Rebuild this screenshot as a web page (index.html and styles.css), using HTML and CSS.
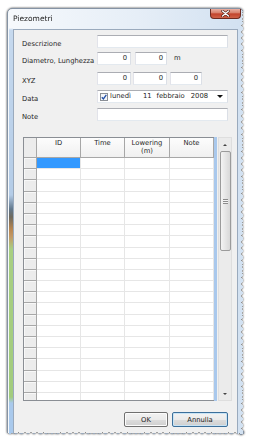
FILE: index.html
```html
<!DOCTYPE html>
<html lang="it">
<head>
<meta charset="utf-8">
<title>Piezometri</title>
<link rel="stylesheet" href="styles.css">
</head>
<body>
<div class="shadow">
  <div class="window">
    <div class="titlebar">
      <span class="title">Piezometri</span>
      <span class="close">
        <svg width="9" height="7" viewBox="0 0 9 7"><path d="M1.5 1 L7.5 6 M7.5 1 L1.5 6" stroke="#4a1a12" stroke-width="2.6" stroke-linecap="round"/><path d="M1.5 1 L7.5 6 M7.5 1 L1.5 6" stroke="#fff" stroke-width="1.4" stroke-linecap="round"/></svg>
      </span>
    </div>
    <div class="client">
      <div class="form">
        <div class="row">
          <label>Descrizione</label>
          <div class="field w-wide"></div>
        </div>
        <div class="row row2">
          <label>Diametro, Lunghezza</label>
          <div class="field w34">0</div>
          <div class="field w32 ml4">0</div>
          <span class="unit">m</span>
        </div>
        <div class="row row3">
          <label>XYZ</label>
          <div class="field w34">0</div>
          <div class="field w34 ml2">0</div>
          <div class="field w32 ml3">0</div>
        </div>
        <div class="row row4">
          <label>Data</label>
          <div class="field date">
            <svg class="check" width="8" height="8" viewBox="0 0 8 8"><rect x="0.5" y="0.5" width="7" height="7" fill="#f4f6f9" stroke="#8a8f96"/><path d="M1.8 4.2 L3.4 5.9 L6.3 1.8" fill="none" stroke="#2250a8" stroke-width="1.3"/></svg>
            <span class="d-day">lunedì</span>
            <span class="d-num">11</span>
            <span class="d-month">febbraio</span>
            <span class="d-year">2008</span>
            <span class="d-arrow"></span>
          </div>
        </div>
        <div class="row row5">
          <label>Note</label>
          <div class="field w-wide"></div>
        </div>
      </div>

      <div class="gridwrap">
        <div class="table">
          <div class="thead">
            <div class="th corner"></div>
            <div class="th">ID</div>
            <div class="th">Time</div>
            <div class="th">Lowering<br>(m)</div>
            <div class="th">Note</div>
          </div>
          <div class="tbody">
            <div class="rh"></div><div class="td sel"></div><div class="td"></div><div class="td"></div><div class="td"></div>
            <div class="rh"></div><div class="td"></div><div class="td"></div><div class="td"></div><div class="td"></div>
            <div class="rh"></div><div class="td"></div><div class="td"></div><div class="td"></div><div class="td"></div>
            <div class="rh"></div><div class="td"></div><div class="td"></div><div class="td"></div><div class="td"></div>
            <div class="rh"></div><div class="td"></div><div class="td"></div><div class="td"></div><div class="td"></div>
            <div class="rh"></div><div class="td"></div><div class="td"></div><div class="td"></div><div class="td"></div>
            <div class="rh"></div><div class="td"></div><div class="td"></div><div class="td"></div><div class="td"></div>
            <div class="rh"></div><div class="td"></div><div class="td"></div><div class="td"></div><div class="td"></div>
            <div class="rh"></div><div class="td"></div><div class="td"></div><div class="td"></div><div class="td"></div>
            <div class="rh"></div><div class="td"></div><div class="td"></div><div class="td"></div><div class="td"></div>
            <div class="rh"></div><div class="td"></div><div class="td"></div><div class="td"></div><div class="td"></div>
            <div class="rh"></div><div class="td"></div><div class="td"></div><div class="td"></div><div class="td"></div>
            <div class="rh"></div><div class="td"></div><div class="td"></div><div class="td"></div><div class="td"></div>
            <div class="rh"></div><div class="td"></div><div class="td"></div><div class="td"></div><div class="td"></div>
            <div class="rh"></div><div class="td"></div><div class="td"></div><div class="td"></div><div class="td"></div>
            <div class="rh"></div><div class="td"></div><div class="td"></div><div class="td"></div><div class="td"></div>
            <div class="rh"></div><div class="td"></div><div class="td"></div><div class="td"></div><div class="td"></div>
            <div class="rh"></div><div class="td"></div><div class="td"></div><div class="td"></div><div class="td"></div>
            <div class="rh"></div><div class="td"></div><div class="td"></div><div class="td"></div><div class="td"></div>
            <div class="rh"></div><div class="td"></div><div class="td"></div><div class="td"></div><div class="td"></div>
            <div class="rh"></div><div class="td"></div><div class="td"></div><div class="td"></div><div class="td"></div>
            <div class="rh"></div><div class="td"></div><div class="td"></div><div class="td"></div><div class="td"></div>
          </div>
        </div>
        <div class="focusbar"></div>
        <div class="scrollbar">
          <div class="sb-btn sb-up"></div>
          <div class="thumb"><span class="grip"></span></div>
          <div class="track"></div>
          <div class="sb-btn sb-down"></div>
        </div>
      </div>

      <div class="buttons">
        <button class="btn btn-ok">OK</button>
        <button class="btn btn-default">Annulla</button>
      </div>
    </div>
  </div>
</div>
</body>
</html>
```

FILE: styles.css
```css
* { box-sizing: border-box; }
html, body { margin: 0; padding: 0; }
body {
  width: 256px;
  height: 447px;
  overflow: hidden;
  background: #ffffff;
  font-family: "DejaVu Sans", "Liberation Sans", sans-serif;
  font-size: 6.8px;
  color: #262626;
}

.shadow {
  padding: 8px 0 0 7px;
  filter: drop-shadow(0.5px 0.5px 1px rgba(0, 0, 0, 0.75));
}

.window {
  width: 237px;
  height: 427px;
  border: 1px solid #8593a4;
  border-radius: 5px 5px 0 0;
  padding: 0 5px;
  display: flex;
  flex-direction: column;
  background:
    linear-gradient(to bottom, rgba(0,0,0,0) 0 19px, #c6d9ee 21px, #b4cce7 186px, #62788c 200px, #6f6a5e 208px, #b88650 220px, #c39a66 228px, #a8cf82 240px, #a2cc7e 388px, #a9c9ec 394px, #a9c9ec 100%) 1px 0 / 4px 100% no-repeat,
    linear-gradient(to right, #f6f9fc 0%, #e6eef7 55%, #d2e1f1 100%);
  -webkit-mask:
    linear-gradient(#000 0 0) 0 0 / calc(100% - 4px) calc(100% - 4px) no-repeat,
    conic-gradient(from 233deg at 100% 50%, #000 74deg, #0000 0) 100% 0 / 4px 6px repeat-y,
    conic-gradient(from 220deg at 100% 50%, #000 99deg, #0000 0) calc(100% - 1px) 2px / 3px 7px repeat-y,
    conic-gradient(from 323deg at 50% 100%, #000 74deg, #0000 0) 0 100% / 6px 4px repeat-x,
    conic-gradient(from 310deg at 50% 100%, #000 100deg, #0000 0) 3px calc(100% - 1px) / 7px 3px repeat-x;
  mask:
    linear-gradient(#000 0 0) 0 0 / calc(100% - 4px) calc(100% - 4px) no-repeat,
    conic-gradient(from 233deg at 100% 50%, #000 74deg, #0000 0) 100% 0 / 4px 6px repeat-y,
    conic-gradient(from 220deg at 100% 50%, #000 99deg, #0000 0) calc(100% - 1px) 2px / 3px 7px repeat-y,
    conic-gradient(from 323deg at 50% 100%, #000 74deg, #0000 0) 0 100% / 6px 4px repeat-x,
    conic-gradient(from 310deg at 50% 100%, #000 100deg, #0000 0) 3px calc(100% - 1px) / 7px 3px repeat-x;
}

.titlebar {
  height: 20px;
  flex: none;
  display: flex;
  align-items: flex-start;
  justify-content: space-between;
}
.title {
  font-size: 7.5px;
  line-height: 9px;
  margin-top: 5px;
  color: #222;
}
.close {
  width: 31px;
  height: 10px;
  margin-right: -3px;
  border: 1px solid #6e2a20;
  border-top: none;
  border-radius: 0 0 4px 4px;
  background: linear-gradient(#eab0a3 0%, #d98470 40%, #c3442d 55%, #cf6248 100%);
  display: flex;
  align-items: center;
  justify-content: center;
}
.close svg { display: block; }

.client {
  flex: 1;
  min-height: 0;
  background: #f0f0f0;
  border: 1px solid #9aaabd;
  display: flex;
  flex-direction: column;
}

.form { padding: 5px 0 0 8px; }
.row {
  display: flex;
  height: 13px;
}
.row label {
  flex: none;
  width: 75px;
  line-height: 10px;
  padding-top: 4px;
  white-space: nowrap;
}
.row2 { margin-top: 4px; }
.row3 { margin-top: 7px; }
.row4 { margin-top: 5px; }
.row5 { margin-top: 5px; }

.field {
  flex: none;
  height: 13px;
  border: 1px solid;
  border-color: #abadb3 #dbdfe6 #e3e9ef #e2e3ea;
  background: #fff;
  text-align: right;
  padding-right: 3px;
  line-height: 11px;
}
.w-wide { width: 131px; }
.w34 { width: 34px; }
.w32 { width: 32px; }
.ml2 { margin-left: 2px; }
.ml3 { margin-left: 3px; }
.ml4 { margin-left: 4px; }
.unit { margin-left: 7px; line-height: 12px; }

.date {
  width: 131px;
  display: flex;
  align-items: center;
  padding: 0 0 0 2px;
  text-align: left;
}
.check { display: block; flex: none; }
.d-day { margin-left: 2px; }
.d-num { margin-left: 12px; }
.d-month { margin-left: 5px; }
.d-year { margin-left: 6px; }
.d-arrow {
  margin-left: auto;
  margin-right: 4px;
  width: 0;
  height: 0;
  border-left: 3px solid transparent;
  border-right: 3px solid transparent;
  border-top: 3px solid #111;
}

.gridwrap {
  margin: 16px 5px 0 9px;
  height: 264px;
  flex: none;
  display: flex;
}
.table {
  width: 191px;
  flex: none;
  border: 1px solid #8a8e94;
  border-right: none;
  display: flex;
  flex-direction: column;
  background: #fff;
}
.thead {
  display: grid;
  grid-template-columns: 13px 44px 44px 45px 44px;
  height: 20px;
  flex: none;
}
.th {
  border-right: 1px solid #a7a7a7;
  border-bottom: 1px solid #a7a7a7;
  background: linear-gradient(#fdfdfd, #f0f0f0);
  text-align: center;
  line-height: 8px;
  padding-top: 1px;
}
.th.corner { background: #ececec; }
.tbody {
  flex: 1;
  overflow: hidden;
  display: grid;
  grid-template-columns: 13px 44px 44px 45px 44px;
  grid-auto-rows: 11.2px;
}
.rh {
  background: #ececec;
  border-right: 1px solid #a7a7a7;
  border-bottom: 1px solid #a7a7a7;
  box-shadow: inset 1px 1px 0 #f8f8f8;
}
.td {
  border-right: 1px solid #e6e6e6;
  border-bottom: 1px solid #e6e6e6;
}
.td.sel { background: #3399ff; }

.focusbar {
  width: 3px;
  flex: none;
  background: #a9c8ec;
}
.scrollbar {
  width: 14px;
  flex: none;
  margin-left: 1px;
  display: flex;
  flex-direction: column;
  background: #ebebeb;
  border: 1px solid #dedede;
}
.sb-btn {
  height: 13px;
  flex: none;
  display: flex;
  align-items: center;
  justify-content: center;
}
.sb-up::after, .sb-down::after {
  content: "";
  width: 0;
  height: 0;
  border-left: 2px solid transparent;
  border-right: 2px solid transparent;
}
.sb-up::after { border-bottom: 2px solid #444; }
.sb-down::after { border-top: 2px solid #444; }
.thumb {
  height: 100px;
  flex: none;
  margin: 0 0.5px;
  border: 1px solid #9b9b9b;
  border-radius: 2px;
  background: linear-gradient(to right, #f4f4f4, #e6e6e6 50%, #d8d8d8);
  display: flex;
  align-items: center;
  justify-content: center;
}
.grip {
  width: 5px;
  height: 5px;
  background: repeating-linear-gradient(#8c8c8c 0 1px, #f4f4f4 1px 2px);
}
.track { flex: 1; }

.buttons {
  margin-top: 11px;
  padding-right: 9px;
  display: flex;
  justify-content: flex-end;
  gap: 4px;
}
.btn {
  height: 15px;
  padding: 0;
  font-family: inherit;
  font-size: 6.8px;
  color: #222;
  border: 1px solid #707070;
  border-radius: 2px;
  background: linear-gradient(#f2f2f2 0%, #ebebeb 50%, #dddddd 51%, #cfcfcf 100%);
  box-shadow: inset 0 0 0 1px #fcfcfc;
}
.btn-ok { width: 44px; }
.btn-default {
  width: 56px;
  border-color: #3c6f9a;
  box-shadow: inset 0 0 0 1px #c8e4f6;
}
```
